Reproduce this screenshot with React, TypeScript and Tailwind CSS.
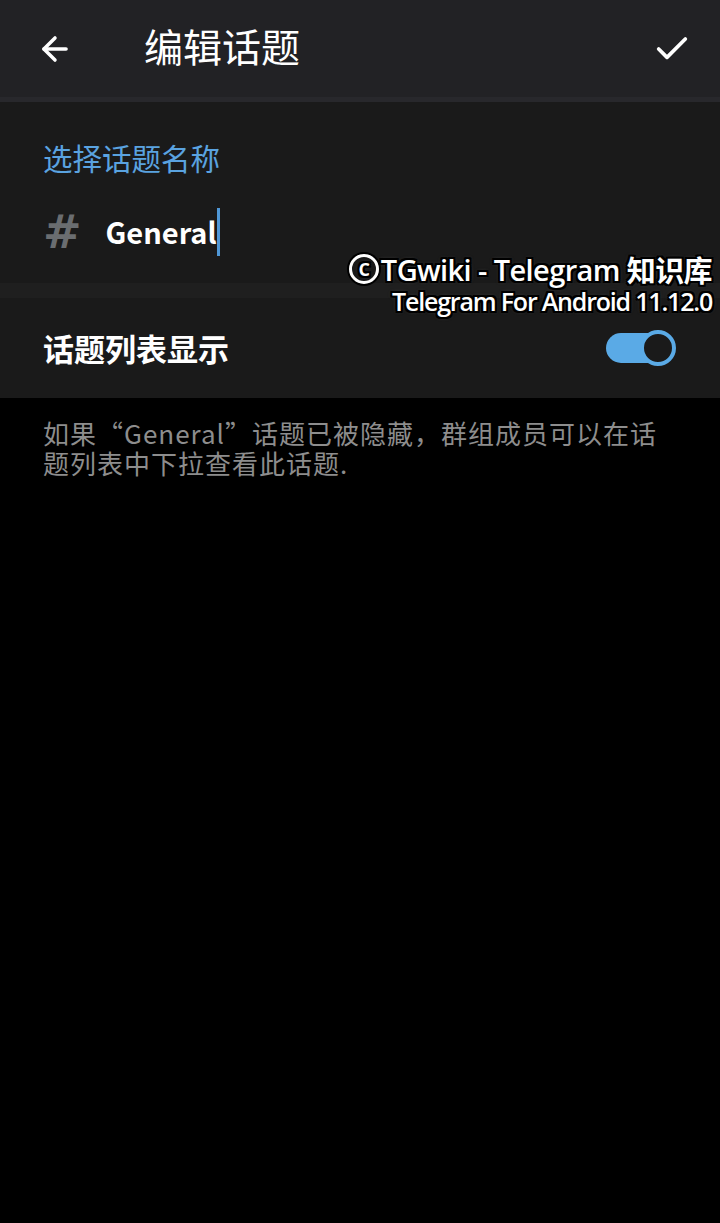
import { ArrowLeft, Check } from "lucide-react";

const cjk = "font-['Noto_Sans_CJK_SC','Noto_Sans',sans-serif]";

function Toggle() {
  return (
    <div className="relative w-[70px] h-[36px] flex items-center">
      <div className="w-[62px] h-[30px] rounded-full bg-[#5aaae6]" />
      <div className="absolute right-0 top-0 w-[36px] h-[36px] rounded-full border-[4px] border-[#5aaae6] bg-[#1a1a1a]" />
    </div>
  );
}

const outline =
  "[text-shadow:2px_0_0_#000,-2px_0_0_#000,0_2px_0_#000,0_-2px_0_#000,2px_2px_0_#000,-2px_-2px_0_#000,2px_-2px_0_#000,-2px_2px_0_#000,0_0_4px_#555]";

export default function App() {
  return (
    <div className={`relative w-[720px] min-h-[1223px] bg-black ${cjk}`}>
      {/* top bar */}
      <header className="h-[102px] bg-[#222225] border-b-[5px] border-[#28282c] flex items-center pl-[36px] pr-[28px]">
        <ArrowLeft className="w-[38px] h-[38px] text-white" strokeWidth={2.2} />
        <h1 className="ml-[70px] text-[39px] text-white leading-none pb-[6px]">编辑话题</h1>
        <Check className="ml-auto w-[40px] h-[40px] text-white" strokeWidth={2.2} />
      </header>

      {/* name field */}
      <section className="h-[181px] bg-[#1a1a1a] px-[43px] pt-[41px]">
        <p className="text-[29.5px] leading-none text-[#5aa3e0]">选择话题名称</p>
        <div className="flex items-center mt-[35px]">
          <span className="text-[46px] font-bold leading-none text-[#6a6d70] font-['DejaVu_Sans',sans-serif]">#</span>
          <span className="ml-[24px] text-[29px] font-bold text-white leading-none">General</span>
          <span className="w-[3px] h-[48px] bg-[#4f97d6]" />
        </div>
      </section>

      <div className="h-[15px] bg-[#1f1f1f]" />

      {/* show in list row */}
      <div className="h-[100px] bg-[#1a1a1a] flex items-center pl-[43px] pr-[44px]">
        <span className="text-[31px] font-bold text-white">话题列表显示</span>
        <div className="ml-auto">
          <Toggle />
        </div>
      </div>

      <p className="px-[43px] pt-[20px] text-[26px] leading-[30px] text-[#8d8d8d] tracking-[1px]">
        如果“General”话题已被隐藏，群组成员可以在话
        <br />
        题列表中下拉查看此话题.
      </p>

      {/* watermark overlay */}
      <div className={`absolute top-[254px] right-[8px] flex flex-col items-end text-white font-['Open_Sans',sans-serif] font-semibold leading-none ${outline}`}>
        <span className="text-[29px] tracking-[-0.6px] flex items-center">
          <span className="mr-[2px] w-[30px] h-[30px] rounded-full border-[3px] border-white flex items-center justify-center text-[18px] font-bold shadow-[0_0_0_2px_#000]">C</span>
          TGwiki - Telegram&nbsp;<span className={cjk}>知识库</span>
        </span>
        <span className="text-[25px] tracking-[-1.2px] mt-[5px]">Telegram For Android 11.12.0</span>
      </div>
    </div>
  );
}
